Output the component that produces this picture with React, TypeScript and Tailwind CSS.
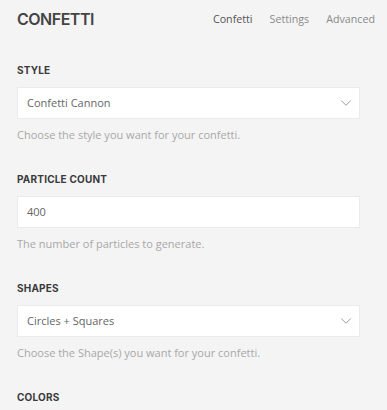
import { ChevronDown } from 'lucide-react';

const body = { fontFamily: '"Open Sans", "Liberation Sans", sans-serif' };
const heading = { fontFamily: 'Inter, "Liberation Sans", sans-serif' };

type FieldProps = {
    label: string;
    value: string;
    help: string;
    select?: boolean;
};

const Field = ({ label, value, help, select }: FieldProps) => (
    <div className="mb-[30px]">
        <div className="h-[14px] leading-[14px] text-[10px] font-bold text-[#3a3a3a] uppercase tracking-[0.2px]" style={heading}>
            {label}
        </div>
        <div className="mt-[10px] h-[32px] w-[343px] bg-white border border-[#ebebeb] flex items-center justify-between pl-[9px] pr-[4px]">
            <span className="text-[11px] text-[#666]">{value}</span>
            {select && <ChevronDown className="h-[18px] w-[18px] text-[#9a9a9a]" strokeWidth={1.3} />}
        </div>
        <p className="mt-[9px] h-[14px] leading-[14px] text-[11px] text-[#a8a8a8]">{help}</p>
    </div>
);

export default function App() {
    return (
        <div className="w-[387px] h-[410px] bg-[#f4f4f4] overflow-hidden" style={body}>
            {/* Header */}
            <div className="h-[38px] flex items-center justify-between pl-[17px] pr-[12px]">
                <h1 className="text-[16px] font-semibold text-[#444] tracking-[-0.5px]" style={heading}>CONFETTI</h1>
                <nav className="flex items-center gap-[17px] text-[10.7px]">
                    <span className="text-[#555]">Confetti</span>
                    <span className="text-[#8a8a8a]">Settings</span>
                    <span className="text-[#8a8a8a]">Advanced</span>
                </nav>
            </div>

            {/* Form */}
            <div className="px-[17px] pt-[25px]">
                <Field label="Style" value="Confetti Cannon" help="Choose the style you want for your confetti." select />
                <Field label="Particle Count" value="400" help="The number of particles to generate." />
                <Field label="Shapes" value="Circles + Squares" help="Choose the Shape(s) you want for your confetti." select />
                <div className="h-[14px] leading-[14px] text-[10px] font-bold text-[#3a3a3a] uppercase tracking-[0.2px]" style={heading}>
                    Colors
                </div>
            </div>
        </div>
    );
}
